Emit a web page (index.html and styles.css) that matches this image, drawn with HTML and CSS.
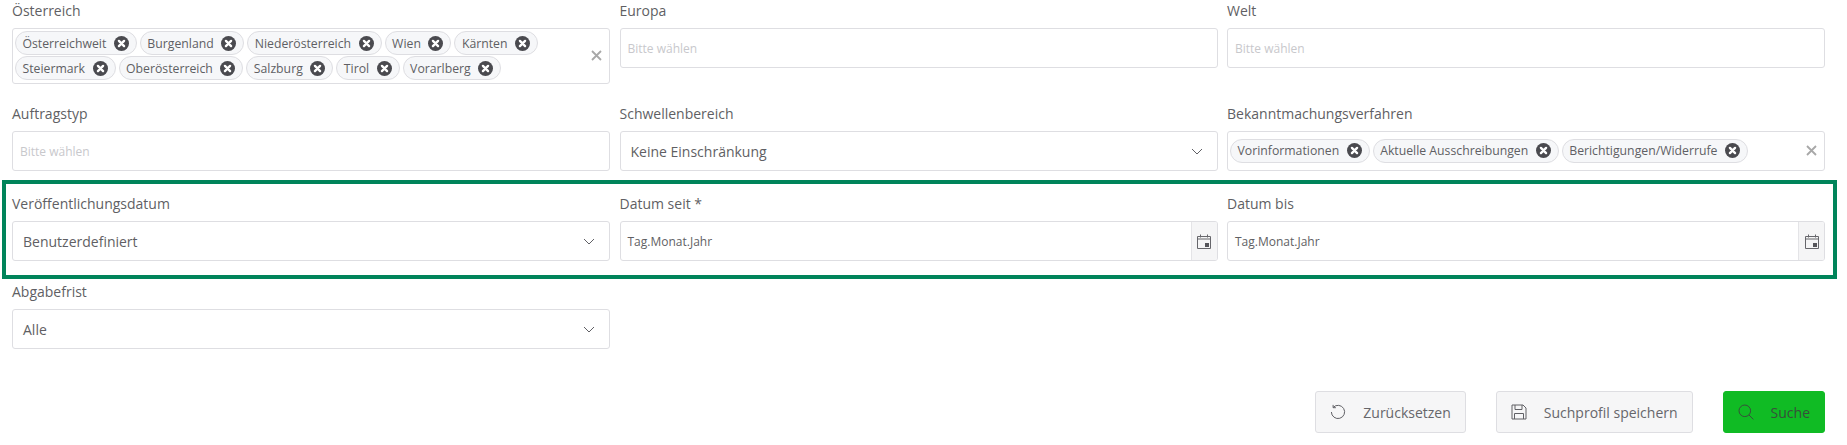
FILE: index.html
```html
<!DOCTYPE html>
<html lang="de">
<head>
  <meta charset="UTF-8" />
  <meta name="viewport" content="width=device-width, initial-scale=1.0" />
  <title>Suche</title>
  <link rel="stylesheet" href="styles.css">
</head>
<body>
  <svg class="sprite" width="0" height="0" aria-hidden="true">
    <symbol id="chip-x" viewBox="0 0 14 14">
      <circle cx="7" cy="7" r="7" fill="#4a4a4f"/>
      <path d="M4.6 4.6l4.8 4.8M9.4 4.6l-4.8 4.8" stroke="#fff" stroke-width="2.2" stroke-linecap="round" fill="none"/>
    </symbol>
    <symbol id="clear-x" viewBox="0 0 11 11">
      <path d="M1 1l9 9M10 1l-9 9" stroke="#a8a8a8" stroke-width="1.8" fill="none"/>
    </symbol>
    <symbol id="chevron" viewBox="0 0 12 7">
      <path d="M1 1l5 5 5-5" stroke="#606065" stroke-width="1" fill="none"/>
    </symbol>
    <symbol id="calendar" viewBox="0 0 14 15">
      <path d="M.5 2.5h13v12H.5zM.5 5h13M3.5 .5v3M10.5 .5v3" stroke="#66666b" stroke-width="1" fill="none"/>
      <rect x="8" y="9" width="4" height="4" fill="#55555a"/>
    </symbol>
  </svg>

  <div class="page">
    <div class="row">
      <div class="field">
        <label>Österreich</label>
        <div class="box chips-box">
          <div class="chips">
            <span class="chip">Österreichweit <svg class="chip-icon"><use href="#chip-x"/></svg></span>
            <span class="chip">Burgenland <svg class="chip-icon"><use href="#chip-x"/></svg></span>
            <span class="chip">Niederösterreich <svg class="chip-icon"><use href="#chip-x"/></svg></span>
            <span class="chip">Wien <svg class="chip-icon"><use href="#chip-x"/></svg></span>
            <span class="chip">Kärnten <svg class="chip-icon"><use href="#chip-x"/></svg></span>
            <span class="chip">Steiermark <svg class="chip-icon"><use href="#chip-x"/></svg></span>
            <span class="chip">Oberösterreich <svg class="chip-icon"><use href="#chip-x"/></svg></span>
            <span class="chip">Salzburg <svg class="chip-icon"><use href="#chip-x"/></svg></span>
            <span class="chip">Tirol <svg class="chip-icon"><use href="#chip-x"/></svg></span>
            <span class="chip">Vorarlberg <svg class="chip-icon"><use href="#chip-x"/></svg></span>
          </div>
          <svg class="clear-icon"><use href="#clear-x"/></svg>
        </div>
      </div>
      <div class="field">
        <label>Europa</label>
        <div class="box placeholder">Bitte wählen</div>
      </div>
      <div class="field">
        <label>Welt</label>
        <div class="box placeholder">Bitte wählen</div>
      </div>
    </div>

    <div class="row row-second">
      <div class="field">
        <label>Auftragstyp</label>
        <div class="box placeholder">Bitte wählen</div>
      </div>
      <div class="field">
        <label>Schwellenbereich</label>
        <div class="box select">Keine Einschränkung <svg class="chevron"><use href="#chevron"/></svg></div>
      </div>
      <div class="field">
        <label>Bekanntmachungsverfahren</label>
        <div class="box chips-box">
          <div class="chips">
            <span class="chip">Vorinformationen <svg class="chip-icon"><use href="#chip-x"/></svg></span>
            <span class="chip">Aktuelle Ausschreibungen <svg class="chip-icon"><use href="#chip-x"/></svg></span>
            <span class="chip">Berichtigungen/Widerrufe <svg class="chip-icon"><use href="#chip-x"/></svg></span>
          </div>
          <svg class="clear-icon"><use href="#clear-x"/></svg>
        </div>
      </div>
    </div>

    <div class="row highlight">
      <div class="field">
        <label>Veröffentlichungsdatum</label>
        <div class="box select">Benutzerdefiniert <svg class="chevron"><use href="#chevron"/></svg></div>
      </div>
      <div class="field">
        <label>Datum seit *</label>
        <div class="box date">
          <span class="date-text">Tag.Monat.Jahr</span>
          <span class="date-btn"><svg class="calendar"><use href="#calendar"/></svg></span>
        </div>
      </div>
      <div class="field">
        <label>Datum bis</label>
        <div class="box date">
          <span class="date-text">Tag.Monat.Jahr</span>
          <span class="date-btn"><svg class="calendar"><use href="#calendar"/></svg></span>
        </div>
      </div>
    </div>

    <div class="row row-last">
      <div class="field">
        <label>Abgabefrist</label>
        <div class="box select">Alle <svg class="chevron"><use href="#chevron"/></svg></div>
      </div>
    </div>

    <div class="actions">
      <button class="btn">
        <svg class="btn-icon" viewBox="0 0 16 16"><path d="M3.2 3.4A6.6 6.6 0 1 1 1.4 8M3.1 .9v2.8h2.8" stroke="#606065" stroke-width="1" fill="none"/></svg>
        Zurücksetzen
      </button>
      <button class="btn">
        <svg class="btn-icon" viewBox="0 0 16 16"><path d="M1 1h11l3 3v11H1zM4 1v4.5h7V1M3.5 15V9.5h9V15" stroke="#606065" stroke-width="1" fill="none"/></svg>
        Suchprofil speichern
      </button>
      <button class="btn btn-search">
        <svg class="btn-icon" viewBox="0 0 16 16"><circle cx="6.8" cy="6.8" r="5.8" stroke="#37503a" stroke-width="1" fill="none"/><path d="M11 11l4.4 4.4" stroke="#37503a" stroke-width="1" fill="none"/></svg>
        Suche
      </button>
    </div>
  </div>
</body>
</html>
```

FILE: styles.css
```css
* {
  box-sizing: border-box;
}
body {
  margin: 0;
  background: #fff;
  font-family: "Open Sans", sans-serif;
  font-size: 14px;
  color: #5f5f64;
}
.sprite {
  display: block;
  height: 0;
}
.page {
  padding: 1px 22px 0 12px;
}
.row {
  display: grid;
  grid-template-columns: repeat(3, 1fr);
  gap: 9.5px;
  align-items: start;
}
.row-second {
  margin-top: 20px;
}
.row-last {
  margin-top: 3px;
}
.highlight {
  margin: 9px -12px 0 -10px;
  padding: 10px 8px 14px 6px;
  border: 4px solid #00845a;
}
label {
  display: block;
  height: 20px;
  line-height: 20px;
  margin-bottom: 7px;
}
.box {
  display: flex;
  align-items: center;
  min-height: 40px;
  background: #fff;
  border: 1px solid #dedee2;
  border-radius: 3px;
}
.placeholder {
  padding: 0 7px;
  font-size: 12px;
  color: #c8c8cc;
}
.select {
  justify-content: space-between;
  padding: 0 14px 0 10px;
}
.chevron {
  width: 12px;
  height: 7px;
}
.chips-box {
  padding: 2px 7px 3px 2px;
}
.chips {
  flex: 1;
  display: flex;
  flex-wrap: wrap;
  gap: 1px 3px;
}
.chip {
  display: flex;
  align-items: center;
  justify-content: space-between;
  gap: 7.5px;
  height: 24px;
  padding: 0 7px 0 6.5px;
  font-size: 12.25px;
  background: #f6f7f9;
  border: 1px solid #dedee2;
  border-radius: 12px;
}
.chip-icon {
  width: 15px;
  height: 15px;
}
.clear-icon {
  flex: none;
  width: 11px;
  height: 11px;
}
.date {
  align-items: stretch;
  overflow: hidden;
}
.date-text {
  flex: 1;
  align-self: center;
  padding-left: 7px;
  font-size: 12px;
}
.date-btn {
  display: flex;
  align-items: center;
  justify-content: center;
  width: 26px;
  background: #f5f5f6;
  border-left: 1px solid #e4e4e7;
}
.calendar {
  width: 14px;
  height: 15px;
}
.actions {
  display: flex;
  justify-content: flex-end;
  gap: 30px;
  margin-top: 42px;
}
.btn {
  display: flex;
  align-items: center;
  gap: 17px;
  height: 42px;
  padding: 0 14px;
  font-family: inherit;
  font-size: 14px;
  color: #66666b;
  background: #f6f6f7;
  border: 1px solid #dedee2;
  border-radius: 3px;
}
.btn-icon {
  width: 16px;
  height: 16px;
}
.btn-search {
  color: #37503a;
  background: #10bb24;
  border-color: #10bb24;
}
```
